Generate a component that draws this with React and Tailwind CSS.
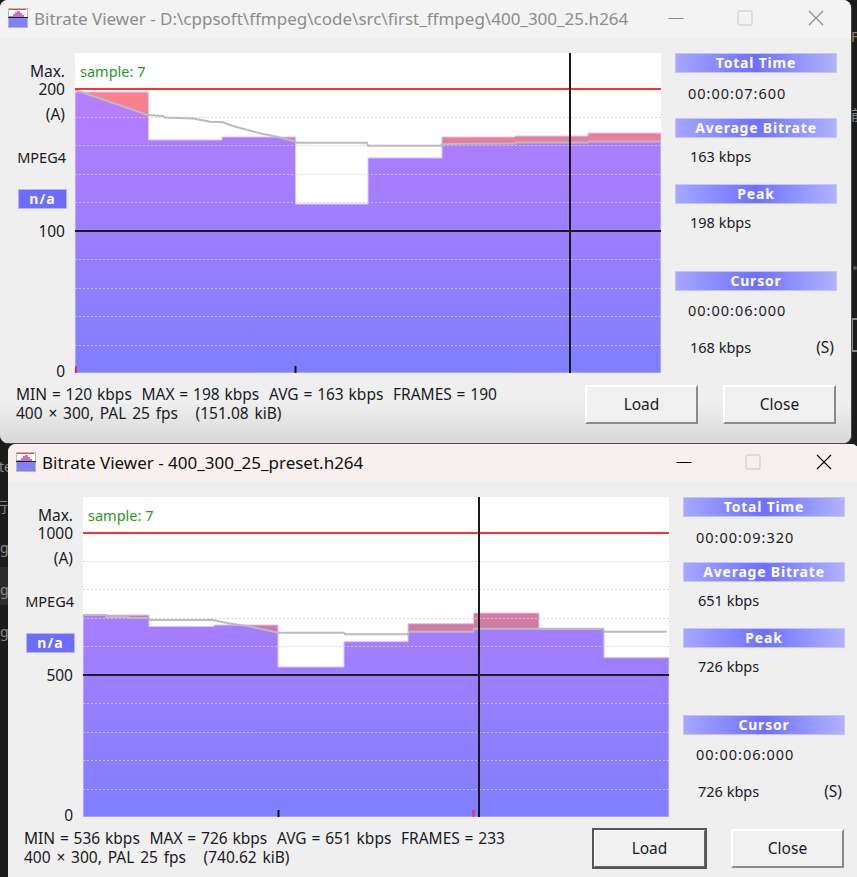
import React from 'react';

const FONT = "font-['Noto_Sans',sans-serif]";

const w1 = {
  id: 'a',
  title: 'Bitrate Viewer - D:\\cppsoft\\ffmpeg\\code\\src\\first_ffmpeg\\400_300_25.h264',
  active: false,
  max: '200',
  mid: '100',
  edges: [0, 73.5, 147, 220.5, 293, 367, 440, 513, 586],
  tops: [39, 87, 84, 151, 105, 84, 83, 80],
  line: [[0, 37], [73, 62], [88, 63], [90, 64.5], [118, 65.5], [135, 68.7], [147, 69], [158, 73], [185, 80.3], [202, 83.7], [221, 88.7], [221, 89.7], [292, 89.7], [293, 92.7], [366, 92.7], [367, 91], [440, 90.5], [441, 89.5], [513, 89.5], [514, 88.5], [586, 88.5]],
  cursor: 494.5,
  ticks: [{ x: 220.5, color: '#111111' }, { x: 1, color: '#ff2040' }],
  stats: ['MIN = 120 kbps  MAX = 198 kbps  AVG = 163 kbps  FRAMES = 190', '400 × 300, PAL 25 fps   (151.08 kiB)'],
  total: '00:00:07:600',
  avg: '163 kbps',
  peak: '198 kbps',
  cursorTime: '00:00:06:000',
  cursorRate: '168 kbps',
};

const w2 = {
  id: 'b',
  title: 'Bitrate Viewer - 400_300_25_preset.h264',
  active: true,
  max: '1000',
  mid: '500',
  edges: [0, 66, 131, 195, 261, 325, 390.5, 456, 521, 586],
  tops: [118, 129.5, 128, 170, 144.7, 126.7, 116, 132, 160.7],
  line: [[0, 118], [23, 118], [23, 120], [45, 120], [45, 121], [66, 121], [66, 123], [130, 123], [139, 125], [147, 126.5], [164, 129], [181, 132.5], [195, 135.7], [261, 135.7], [262, 137.3], [325, 137.3], [326, 134.7], [390, 134.7], [391, 131.7], [520, 131.7], [521, 134.7], [584, 134.7]],
  cursor: 395.7,
  ticks: [{ x: 195.5, color: '#111111' }, { x: 390.5, color: '#ff2060' }],
  stats: ['MIN = 536 kbps  MAX = 726 kbps  AVG = 651 kbps  FRAMES = 233', '400 × 300, PAL 25 fps   (740.62 kiB)'],
  total: '00:00:09:320',
  avg: '651 kbps',
  peak: '726 kbps',
  cursorTime: '00:00:06:000',
  cursorRate: '726 kbps',
};

const GRID = [64, 92.4, 121, 149.4, 206.4, 235, 263.4, 292];

const AppIcon = () => (
  <svg width="20" height="20" viewBox="0 0 20 20" className="shrink-0">
    <rect x="0.5" y="0.5" width="19" height="19" fill="#ffffff" stroke="#b8b8b8" />
    <rect x="1" y="1" width="17" height="1" fill="#f04050" />
    <path d="M1 10V8H5V6H7V4H9V3H12V5H14V7H16V10Z" fill="#d070b0" />
    <rect x="1" y="10" width="18" height="9" fill="#8080ff" />
    <rect x="0" y="9" width="20" height="1" fill="#222222" />
  </svg>
);

const Chart = ({ data }) => {
  const { id, edges, tops, line, cursor, ticks } = data;
  const barsPath =
    'M0 320 ' +
    tops.map((t, i) => `L${edges[i]} ${t} L${edges[i + 1]} ${t}`).join(' ') +
    ' L586 320 Z';
  const linePts = line.map((p) => p.join(',')).join(' ');
  const underLine = `M0 320 L${line.map((p) => p.join(' ')).join(' L')} L586 ${line[line.length - 1][1]} L586 320 Z`;

  return (
    <svg width="586" height="320" viewBox="0 0 586 320" className="block bg-white">
      <defs>
        <linearGradient id={`purple-${id}`} gradientUnits="userSpaceOnUse" x1="0" y1="36" x2="0" y2="320">
          <stop offset="0" stopColor="#b87dff" />
          <stop offset="1" stopColor="#7f7fff" />
        </linearGradient>
        <linearGradient id={`pink-${id}`} gradientUnits="userSpaceOnUse" x1="0" y1="36" x2="0" y2="130">
          <stop offset="0" stopColor="#ff808c" />
          <stop offset="0.55" stopColor="#e67f98" />
          <stop offset="1" stopColor="#cf7aa4" />
        </linearGradient>
        <clipPath id={`bars-${id}`}>
          <path d={barsPath} />
        </clipPath>
      </defs>
      <path d={barsPath} fill={`url(#pink-${id})`} />
      <path d={underLine} fill={`url(#purple-${id})`} clipPath={`url(#bars-${id})`} />
      <path d={barsPath} fill="none" stroke="#d8c4ff" strokeWidth="1" />
      {GRID.map((y) => (
        <line key={y} x1="0" x2="586" y1={Math.floor(y) + 0.5} y2={Math.floor(y) + 0.5} stroke="#cfcfcf" strokeOpacity="0.85" strokeDasharray="2 2" />
      ))}
      <polyline points={linePts} fill="none" stroke="#bbbbbb" strokeWidth="2" />
      <rect x="0" y="35" width="586" height="2" fill="#ff3030" />
      <rect x="0" y="177" width="586" height="2" fill="#1a1a1a" />
      <rect x={Math.round(cursor) - 1} y="0" width="2" height="320" fill="#1a1a1a" />
      {ticks.map((t) => (
        <rect key={t.x} x={t.x - 1} y="313" width="2" height="7" fill={t.color} />
      ))}
    </svg>
  );
};

const Head = ({ children }) => (
  <div className="h-5 flex items-center justify-center border border-[#c4c4ff] bg-gradient-to-r from-[#a6a6ff] via-[#6f6fff] to-[#b2b2ff] text-white font-bold text-[14px] tracking-[0.8px] leading-none">
    {children}
  </div>
);

const Value = ({ className, children }) => (
  <div className={`text-[14.5px] leading-5 text-[#1a1a24] ${className}`}>{children}</div>
);

const Side = ({ data }) => (
  <div className="w-[162px] ml-[14px] flex flex-col">
    <Head>Total Time</Head>
    <Value className="pl-[13px] pt-[10px] h-[45px] tracking-[1px]">{data.total}</Value>
    <Head>Average Bitrate</Head>
    <Value className="pl-[15px] pt-[8px] h-[46px]">{data.avg}</Value>
    <Head>Peak</Head>
    <Value className="pl-[15px] pt-[8px] h-[67px]">{data.peak}</Value>
    <Head>Cursor</Head>
    <Value className="pl-[13px] pt-[9px] h-[46px] tracking-[1px]">{data.cursorTime}</Value>
    <Value className="pl-[15px] pr-[3px] flex justify-between">
      <span>{data.cursorRate}</span>
      <span className="text-[15.5px]">(S)</span>
    </Value>
  </div>
);

const Axis = ({ data }) => (
  <div className="w-[75px] h-[320px] pr-[10px] flex flex-col items-end text-[15.5px] leading-5 text-[#1a1a24]">
    <div className="shrink-0 mt-[9px] leading-[18px]">Max.</div>
    <div className="shrink-0 leading-[18px]">{data.max}</div>
    <div className="shrink-0 mt-[6px]">(A)</div>
    <div className="shrink-0 mt-[23px] -mr-[1px] text-[14.5px]">MPEG4</div>
    <div className="shrink-0 mt-[22px] -mr-[2px] w-[49px] h-5 flex items-center justify-center bg-[#6c6cff] border border-[#b4b4ff] text-white font-bold text-[14px] tracking-[1px] leading-none">
      n/a
    </div>
    <div className="shrink-0 mt-[12px]">{data.mid}</div>
    <div className="shrink-0 mt-[120px]">0</div>
  </div>
);

const Btn = ({ focused, children }) => (
  <button
    className={`w-[113px] h-[39px] flex items-center justify-center bg-[#f0f0f0] text-[15.5px] text-[#1a1a24] border-2 border-t-white border-l-white border-r-[#8a8a8a] border-b-[#8a8a8a] ${
      focused ? 'outline-2 outline-[#555555] -outline-offset-1 border-r-[#666666] border-b-[#666666]' : ''
    }`}
  >
    {children}
  </button>
);

const Window = ({ data, className, shaded }) => (
  <div className={`relative flex flex-col w-[851px] rounded-[8px] overflow-hidden bg-[#efefef] ${FONT} ${className}`}>
    <div
      className={`h-[38px] shrink-0 pl-[8px] pb-[2px] flex items-center gap-[6px] ${
        data.active ? 'bg-[#f7f0ee] text-[#111111]' : 'bg-[#f3f3f3] text-[#8c8c8c]'
      }`}
    >
      <AppIcon />
      <span className="text-[17px] leading-none whitespace-nowrap">{data.title}</span>
      <div className={`ml-auto flex items-center ${data.active ? 'text-black' : 'text-[#8c8c8c]'}`}>
        <svg width="16" height="16" viewBox="0 0 16 16" className="mr-[53px]">
          <path d="M0.5 8.5H15.5" stroke="currentColor" />
        </svg>
        <svg width="16" height="16" viewBox="0 0 16 16" className="mr-[55px]">
          <rect x="1" y="1" width="14" height="14" rx="1.5" fill="none" stroke="#d4d4d4" strokeWidth="1.4" />
        </svg>
        <svg width="16" height="16" viewBox="0 0 16 16" className="mr-[27px]">
          <path d="M1 1L15 15M15 1L1 15" stroke="currentColor" strokeWidth="1.2" />
        </svg>
      </div>
    </div>
    <div className="relative flex-1">
      {shaded && <div className="absolute left-0 right-0 bottom-0 h-[40px] bg-gradient-to-b from-transparent to-[#d8d8d8]" />}
      <div className="relative pt-[15px] flex items-start">
        <Axis data={data} />
        <div className="relative">
          <Chart data={data} />
          <span className="absolute left-[5px] top-[8px] text-[14.5px] leading-5 text-[#1f9a1f]">sample: 7</span>
        </div>
        <Side data={data} />
      </div>
      <div className="relative flex items-start pl-[16px] pr-[15px] pt-[11px]">
        <div className="mt-px text-[15.5px] leading-[19px] text-[#1a1a24] whitespace-pre">
          <div className="[word-spacing:0.8px]">{data.stats[0]}</div>
          <div className="[word-spacing:1.8px]">{data.stats[1]}</div>
        </div>
        <div className="ml-auto flex gap-[25px] pt-px">
          <Btn focused={data.active}>Load</Btn>
          <Btn>Close</Btn>
        </div>
      </div>
    </div>
  </div>
);

// bits of the desktop that show around the two windows
const Backdrop = () => (
  <div className="font-['Noto_Sans','Noto_Sans_CJK_SC',sans-serif] text-[14px] leading-none text-[#8a8a8a]">
    <div className="absolute left-0 top-[567px] w-[8px] h-[38px] bg-[#2c2c2c]" />
    <span className="absolute -left-[1px] top-[460px]">te</span>
    <span className="absolute -left-[6px] top-[500px]">行</span>
    <span className="absolute left-0 top-[541px]">g</span>
    <span className="absolute left-0 top-[583px]">g</span>
    <span className="absolute left-0 top-[625px]">g</span>
    <span className="absolute left-[851px] top-[30px] text-[#a08050]">F</span>
    <span className="absolute left-[851px] top-[108px]">前</span>
    <div className="absolute left-[853px] top-[266px] w-[4px] h-[4px] rounded-full bg-[#555555]" />
    <div className="absolute left-[851px] top-[318px] w-[8px] h-[34px] border-2 border-[#8a8a8a]" />
  </div>
);

const App = () => (
  <div className="relative w-[857px] h-[877px] overflow-hidden bg-[#1c1c1c]">
    <Backdrop />
    <Window data={w1} className="h-[443px] shadow-[1px_1px_0_#4a4a4a]" shaded />
    <Window data={w2} className="h-[440px] ml-[8px] mt-px" />
  </div>
);

export default App;
